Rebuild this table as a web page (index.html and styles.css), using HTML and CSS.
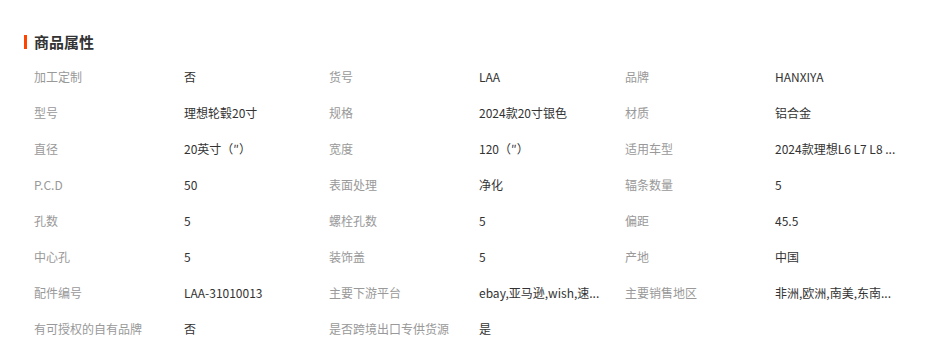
FILE: index.html
```html
<!DOCTYPE html>
<html lang="zh-CN">
<head>
<meta charset="utf-8">
<title>商品属性</title>
<link rel="stylesheet" href="styles.css">
</head>
<body>
<section class="attrs">
  <h2 class="title"><span class="bar"></span>商品属性</h2>
  <div class="grid">
    <div class="k">加工定制</div><div class="v">否</div>
    <div class="k">货号</div><div class="v">LAA</div>
    <div class="k">品牌</div><div class="v">HANXIYA</div>

    <div class="k">型号</div><div class="v">理想轮毂20寸</div>
    <div class="k">规格</div><div class="v">2024款20寸银色</div>
    <div class="k">材质</div><div class="v">铝合金</div>

    <div class="k">直径</div><div class="v">20英寸（″）</div>
    <div class="k">宽度</div><div class="v">120（″）</div>
    <div class="k">适用车型</div><div class="v">2024款理想L6 L7 L8 ...</div>

    <div class="k">P.C.D</div><div class="v">50</div>
    <div class="k">表面处理</div><div class="v">净化</div>
    <div class="k">辐条数量</div><div class="v">5</div>

    <div class="k">孔数</div><div class="v">5</div>
    <div class="k">螺栓孔数</div><div class="v">5</div>
    <div class="k">偏距</div><div class="v">45.5</div>

    <div class="k">中心孔</div><div class="v">5</div>
    <div class="k">装饰盖</div><div class="v">5</div>
    <div class="k">产地</div><div class="v">中国</div>

    <div class="k">配件编号</div><div class="v">LAA-31010013</div>
    <div class="k">主要下游平台</div><div class="v">ebay,亚马逊,wish,速...</div>
    <div class="k">主要销售地区</div><div class="v">非洲,欧洲,南美,东南...</div>

    <div class="k">有可授权的自有品牌</div><div class="v">否</div>
    <div class="k">是否跨境出口专供货源</div><div class="v">是</div>
  </div>
</section>
</body>
</html>
```

FILE: styles.css
```css
html, body {
  margin: 0;
  padding: 0;
  background: #fff;
}
body {
  font-family: "Noto Sans CJK SC", "Noto Sans", sans-serif;
  color: #333;
}
.attrs {
  padding: 32px 0 0 24px;
}
.title {
  display: flex;
  align-items: center;
  gap: 7px;
  margin: 0;
  height: 20px;
  font-size: 15px;
  font-weight: 700;
  color: #333;
  line-height: 20px;
}
.bar {
  width: 3px;
  height: 14px;
  background: #ff4400;
}
.grid {
  display: grid;
  grid-template-columns: 150px 145px 150px 146px 150px 140px;
  grid-auto-rows: 36px;
  margin-top: 7px;
  padding-left: 10px;
  font-size: 12px;
  line-height: 36px;
}
.k {
  color: #999;
  white-space: nowrap;
}
.v {
  color: #333;
  white-space: nowrap;
  overflow: hidden;
}
```
